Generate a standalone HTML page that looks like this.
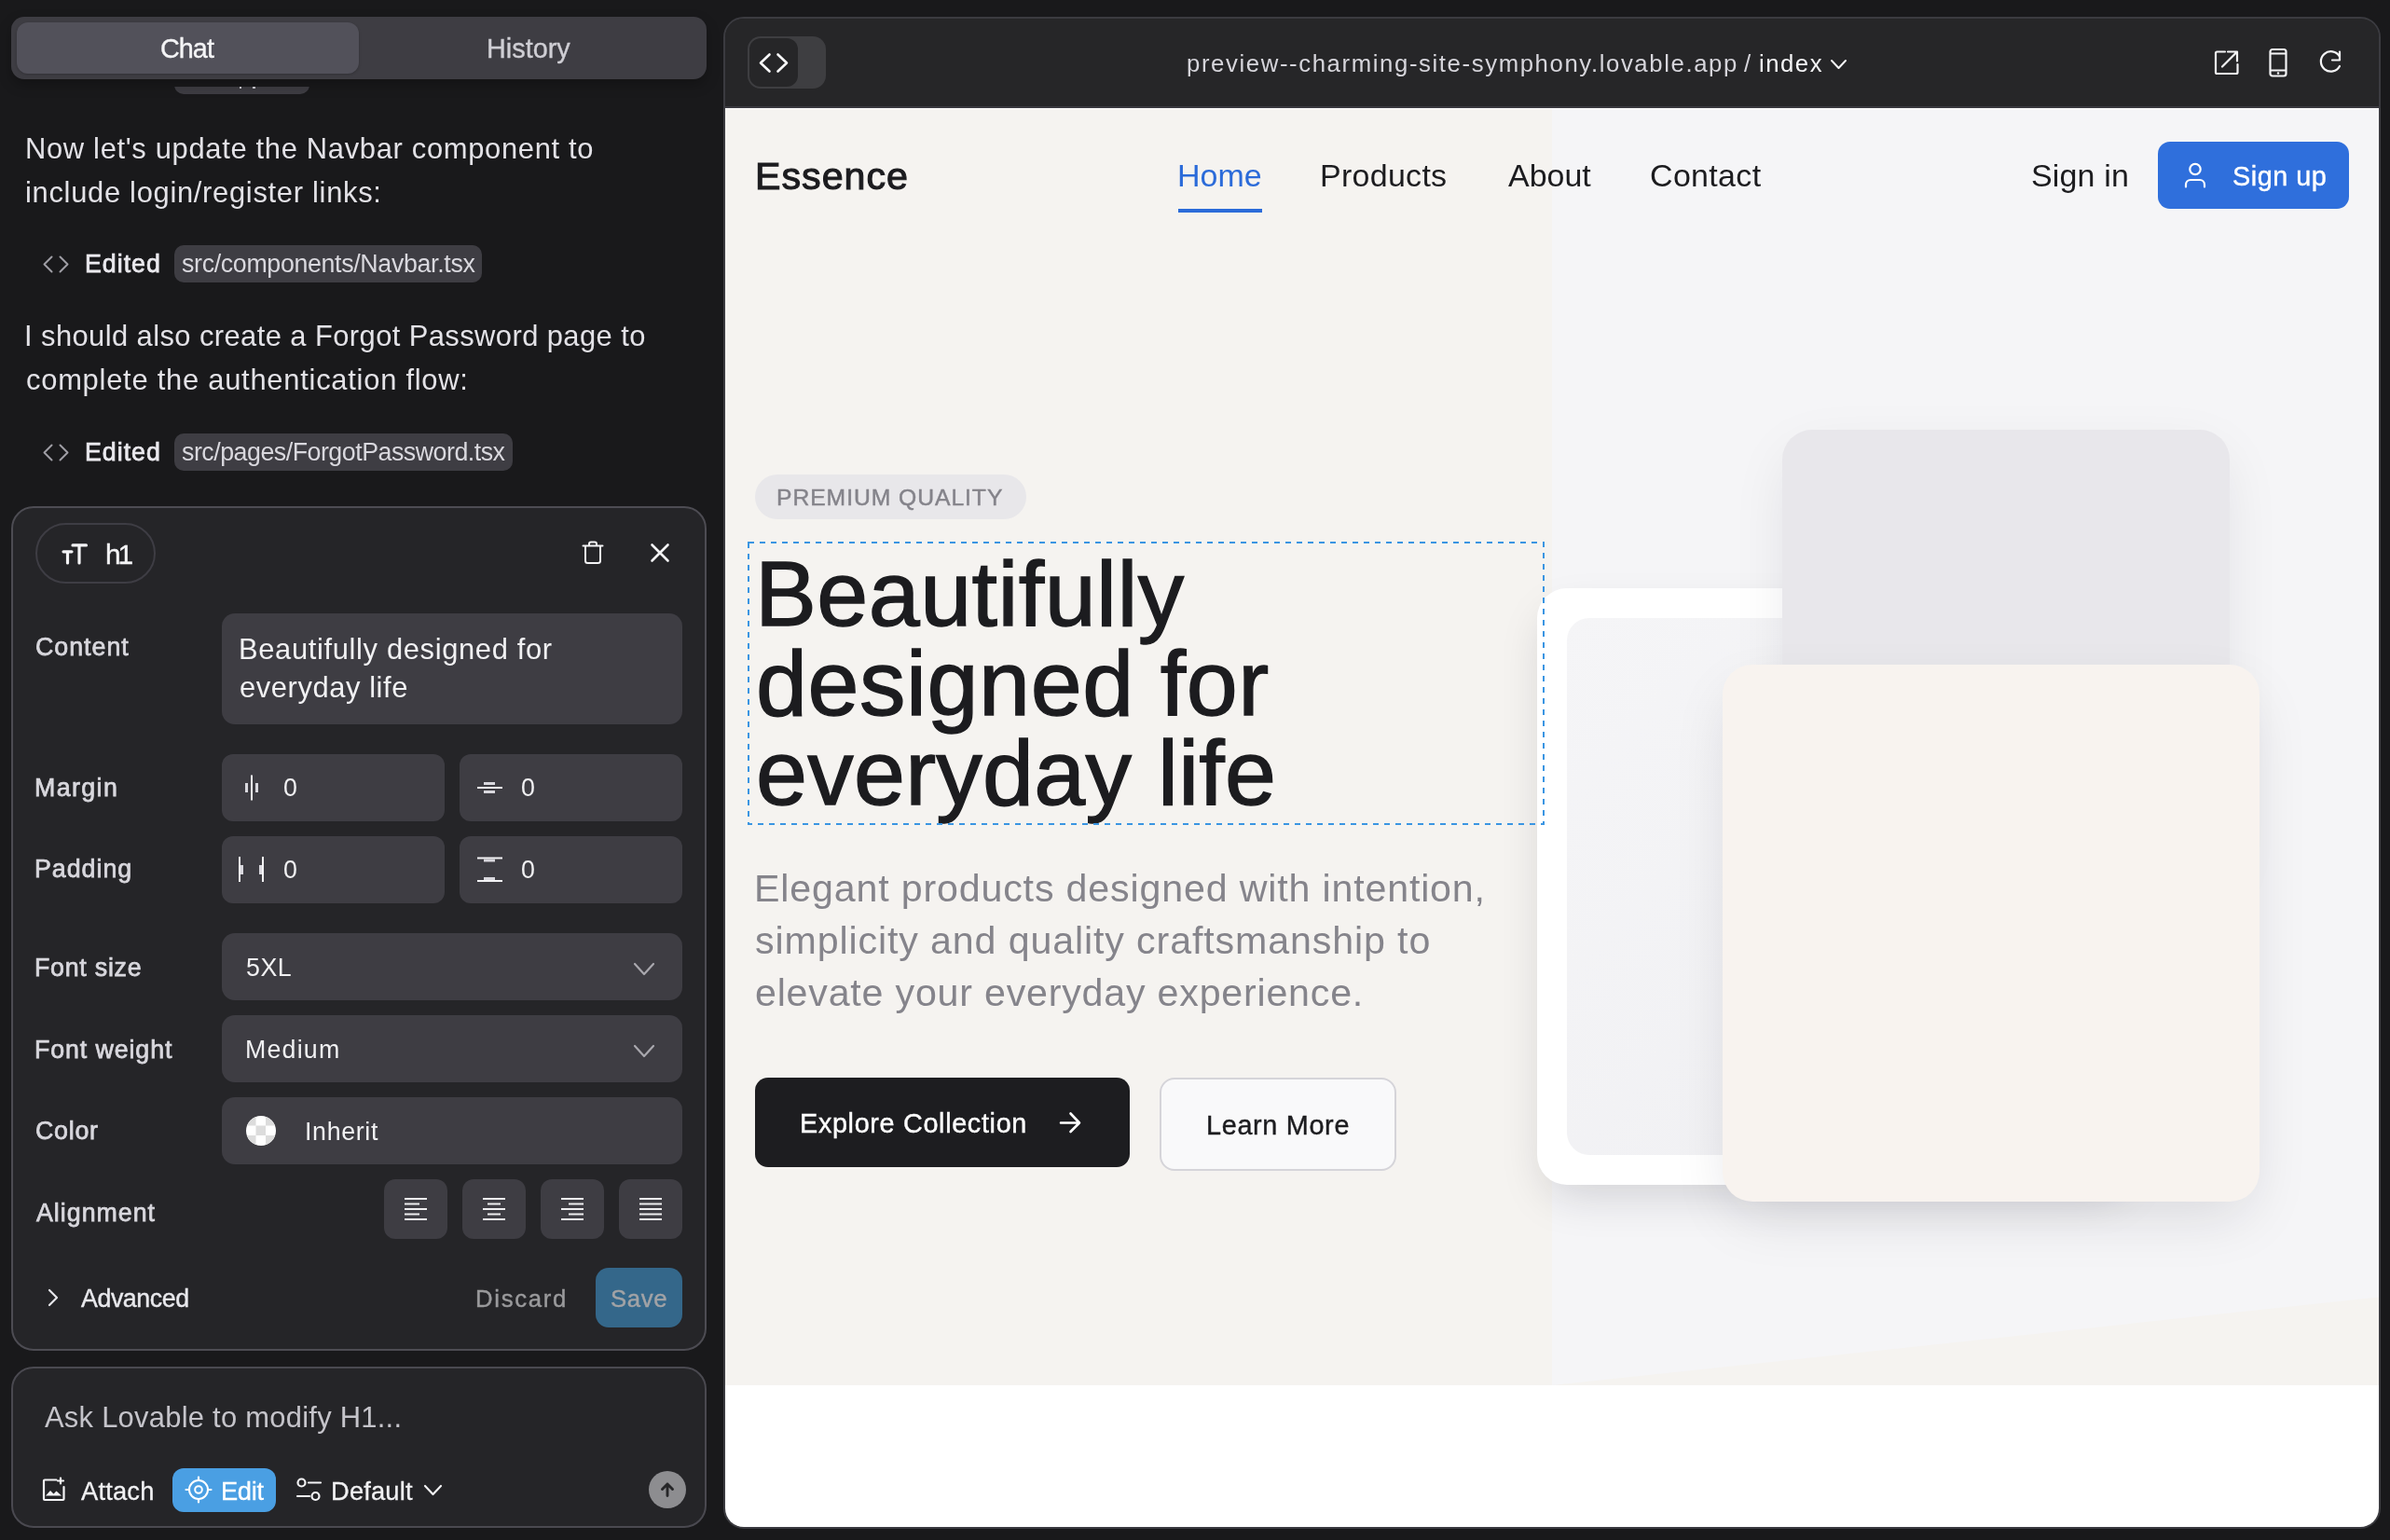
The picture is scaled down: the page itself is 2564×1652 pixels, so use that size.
<!DOCTYPE html>
<html><head><meta charset="utf-8"><style>
html,body{margin:0;padding:0;}
body{width:2564px;height:1652px;position:relative;overflow:hidden;background:#19191b;font-family:"Liberation Sans", sans-serif;}
</style></head><body>
<div style="position:absolute;left:0;top:93px;width:770px;height:10px;overflow:hidden"><div style="position:absolute;left:187px;top:-32px;width:145px;height:40px;border-radius:10px;background:#3e3d43"></div><div style="position:absolute;left:256.5px;top:0;width:2.5px;height:2px;background:#cfced4"></div><div style="position:absolute;left:271px;top:0;width:2.5px;height:2px;background:#cfced4"></div></div>
<div style="position:absolute;left:12px;top:18px;width:746px;height:67px;background:#3e3d43;border-radius:14px;box-shadow:0 6px 14px rgba(0,0,0,0.25);"></div>
<div style="position:absolute;left:18px;top:24px;width:367px;height:55px;background:#52515a;border-radius:12px;box-shadow:0 1px 3px rgba(0,0,0,0.2);"></div>
<div style="position:absolute;left:172.00px;top:37.88px;font-size:28.84px;line-height:28.84px;color:#f4f4f6;font-weight:400;letter-spacing:-1.000px;white-space:nowrap;will-change:transform;-webkit-text-stroke:0.35px #f4f4f6;">Chat</div>
<div style="position:absolute;left:522.00px;top:37.88px;font-size:28.84px;line-height:28.84px;color:#cfced4;font-weight:400;letter-spacing:0.000px;white-space:nowrap;will-change:transform;-webkit-text-stroke:0.35px #cfced4;">History</div>
<div style="position:absolute;left:27.40px;top:144.74px;font-size:30.9px;line-height:30.9px;color:#e3e2e7;font-weight:400;letter-spacing:0.682px;white-space:nowrap;will-change:transform;">Now let's update the Navbar component to</div>
<div style="position:absolute;left:27.40px;top:191.84px;font-size:30.9px;line-height:30.9px;color:#e3e2e7;font-weight:400;letter-spacing:0.700px;white-space:nowrap;will-change:transform;">include login/register links:</div>
<div style="position:absolute;left:26.00px;top:346.04px;font-size:30.9px;line-height:30.9px;color:#e3e2e7;font-weight:400;letter-spacing:0.422px;white-space:nowrap;will-change:transform;">I should also create a Forgot Password page to</div>
<div style="position:absolute;left:28.00px;top:392.74px;font-size:30.9px;line-height:30.9px;color:#e3e2e7;font-weight:400;letter-spacing:0.750px;white-space:nowrap;will-change:transform;">complete the authentication flow:</div>
<svg style="position:absolute;left:45px;top:274px;" width="30" height="19" viewBox="0 0 30 19" fill="none"><path d="M10.5 1.5 L2.5 9.5 L10.5 17.5 M19.5 1.5 L27.5 9.5 L19.5 17.5" stroke="#9f9ea5" stroke-width="2" stroke-linecap="round" stroke-linejoin="round"/></svg>
<div style="position:absolute;left:91.00px;top:269.63px;font-size:26.78px;line-height:26.78px;color:#ebeaef;font-weight:400;letter-spacing:1.000px;white-space:nowrap;will-change:transform;-webkit-text-stroke:0.75px #ebeaef;">Edited</div>
<div style="position:absolute;left:187px;top:263px;width:330px;height:40px;background:#3e3d43;border-radius:10px;"></div>
<div style="position:absolute;left:195.00px;top:270.03px;font-size:26.78px;line-height:26.78px;color:#d9d8de;font-weight:400;letter-spacing:-0.333px;white-space:nowrap;will-change:transform;">src/components/Navbar.tsx</div>
<svg style="position:absolute;left:45px;top:476px;" width="30" height="19" viewBox="0 0 30 19" fill="none"><path d="M10.5 1.5 L2.5 9.5 L10.5 17.5 M19.5 1.5 L27.5 9.5 L19.5 17.5" stroke="#9f9ea5" stroke-width="2" stroke-linecap="round" stroke-linejoin="round"/></svg>
<div style="position:absolute;left:91.00px;top:471.63px;font-size:26.78px;line-height:26.78px;color:#ebeaef;font-weight:400;letter-spacing:1.000px;white-space:nowrap;will-change:transform;-webkit-text-stroke:0.75px #ebeaef;">Edited</div>
<div style="position:absolute;left:187px;top:465px;width:363px;height:40px;background:#3e3d43;border-radius:10px;"></div>
<div style="position:absolute;left:195.00px;top:472.03px;font-size:26.78px;line-height:26.78px;color:#d9d8de;font-weight:400;letter-spacing:-0.481px;white-space:nowrap;will-change:transform;">src/pages/ForgotPassword.tsx</div>
<div style="position:absolute;left:12px;top:543px;width:746px;height:906px;background:#252528;border-radius:24px;box-sizing:border-box;border:2px solid #4d4c53;"></div>
<div style="position:absolute;left:38px;top:561px;width:129px;height:65px;background:transparent;border-radius:33px;box-sizing:border-box;border:2px solid #3e3d44;"></div>
<svg style="position:absolute;left:64px;top:581px;" width="32" height="26" viewBox="0 0 32 26" fill="none"><path d="M4 10.8 H13 M8.5 10.8 V23 M14 3.9 H28.5 M21 3.9 V23" stroke="#f4f4f6" stroke-width="3.2" stroke-linecap="round"/></svg>
<div style="position:absolute;left:113.00px;top:580.01px;font-size:29.87px;line-height:29.87px;color:#f4f4f6;font-weight:400;letter-spacing:-3.200px;white-space:nowrap;will-change:transform;-webkit-text-stroke:0.4px #f4f4f6;">h1</div>
<svg style="position:absolute;left:624px;top:580px;" width="24" height="26" viewBox="0 0 24 26" fill="none"><path d="M1.5 5.5 H22.5 M8 5 V3.5 A2 2 0 0 1 10 1.5 H14 A2 2 0 0 1 16 3.5 V5 M4 5.5 V21.5 A2.5 2.5 0 0 0 6.5 24 H17.5 A2.5 2.5 0 0 0 20 21.5 V5.5" stroke="#f4f4f6" stroke-width="2" stroke-linecap="round" stroke-linejoin="round"/></svg>
<svg style="position:absolute;left:697px;top:582px;" width="22" height="22" viewBox="0 0 22 22" fill="none"><path d="M2.5 2.5 L19.5 19.5 M19.5 2.5 L2.5 19.5" stroke="#f4f4f6" stroke-width="2.6" stroke-linecap="round"/></svg>
<div style="position:absolute;left:37.50px;top:681.13px;font-size:26.78px;line-height:26.78px;color:#d9d8de;font-weight:400;letter-spacing:1.000px;white-space:nowrap;will-change:transform;-webkit-text-stroke:0.75px #d9d8de;">Content</div>
<div style="position:absolute;left:238px;top:658px;width:494px;height:119px;background:#3e3d43;border-radius:14px;"></div>
<div style="position:absolute;left:256.00px;top:682.34px;font-size:30.9px;line-height:30.9px;color:#f1f1f3;font-weight:400;letter-spacing:0.652px;white-space:nowrap;will-change:transform;">Beautifully designed for</div>
<div style="position:absolute;left:257.00px;top:723.34px;font-size:30.9px;line-height:30.9px;color:#f1f1f3;font-weight:400;letter-spacing:0.583px;white-space:nowrap;will-change:transform;">everyday life</div>
<div style="position:absolute;left:37.00px;top:832.03px;font-size:26.78px;line-height:26.78px;color:#d9d8de;font-weight:400;letter-spacing:1.400px;white-space:nowrap;will-change:transform;-webkit-text-stroke:0.75px #d9d8de;">Margin</div>
<div style="position:absolute;left:238px;top:809px;width:239px;height:72px;background:#3e3d43;border-radius:12px;"></div>
<div style="position:absolute;left:493px;top:809px;width:239px;height:72px;background:#3e3d43;border-radius:12px;"></div>
<svg style="position:absolute;left:262px;top:831px;" width="16" height="28" viewBox="0 0 16 28" fill="none"><rect x="1" y="9" width="3" height="10" fill="#d9d8de"/><rect x="12" y="9" width="3" height="10" fill="#d9d8de"/><rect x="7" y="0.5" width="2" height="27" fill="#f4f4f6"/></svg>
<div style="position:absolute;left:304.00px;top:832.43px;font-size:26.78px;line-height:26.78px;color:#f1f1f3;font-weight:400;letter-spacing:27.000px;white-space:nowrap;will-change:transform;">0</div>
<svg style="position:absolute;left:512px;top:838px;" width="27" height="14" viewBox="0 0 27 14" fill="none"><rect x="7" y="1" width="12" height="3" fill="#d9d8de"/><rect x="7" y="10" width="12" height="3" fill="#d9d8de"/><rect x="0" y="6" width="27" height="2" fill="#f4f4f6"/></svg>
<div style="position:absolute;left:559.00px;top:832.43px;font-size:26.78px;line-height:26.78px;color:#f1f1f3;font-weight:400;letter-spacing:20.000px;white-space:nowrap;will-change:transform;">0</div>
<div style="position:absolute;left:37.00px;top:919.33px;font-size:26.78px;line-height:26.78px;color:#d9d8de;font-weight:400;letter-spacing:1.000px;white-space:nowrap;will-change:transform;-webkit-text-stroke:0.75px #d9d8de;">Padding</div>
<div style="position:absolute;left:238px;top:897px;width:239px;height:72px;background:#3e3d43;border-radius:12px;"></div>
<div style="position:absolute;left:493px;top:897px;width:239px;height:72px;background:#3e3d43;border-radius:12px;"></div>
<svg style="position:absolute;left:255px;top:919px;" width="30" height="28" viewBox="0 0 30 28" fill="none"><rect x="1" y="0" width="2" height="27" fill="#f4f4f6"/><rect x="3" y="9" width="3" height="10" fill="#d9d8de"/><rect x="26" y="0" width="2" height="27" fill="#f4f4f6"/><rect x="23" y="9" width="3" height="10" fill="#d9d8de"/></svg>
<div style="position:absolute;left:304.00px;top:920.43px;font-size:26.78px;line-height:26.78px;color:#f1f1f3;font-weight:400;letter-spacing:27.000px;white-space:nowrap;will-change:transform;">0</div>
<svg style="position:absolute;left:512px;top:919px;" width="27" height="28" viewBox="0 0 27 28" fill="none"><rect x="0" y="0.5" width="27" height="2" fill="#f4f4f6"/><rect x="7" y="2.5" width="12" height="3" fill="#d9d8de"/><rect x="7" y="22" width="12" height="3" fill="#d9d8de"/><rect x="0" y="25" width="27" height="2" fill="#f4f4f6"/></svg>
<div style="position:absolute;left:559.00px;top:920.43px;font-size:26.78px;line-height:26.78px;color:#f1f1f3;font-weight:400;letter-spacing:20.000px;white-space:nowrap;will-change:transform;">0</div>
<div style="position:absolute;left:36.50px;top:1024.53px;font-size:26.78px;line-height:26.78px;color:#d9d8de;font-weight:400;letter-spacing:0.750px;white-space:nowrap;will-change:transform;-webkit-text-stroke:0.75px #d9d8de;">Font size</div>
<div style="position:absolute;left:238px;top:1001px;width:494px;height:72px;background:#3e3d43;border-radius:14px;"></div>
<div style="position:absolute;left:264.00px;top:1024.53px;font-size:26.78px;line-height:26.78px;color:#f1f1f3;font-weight:400;letter-spacing:0.500px;white-space:nowrap;will-change:transform;">5XL</div>
<svg style="position:absolute;left:678.5px;top:1031.5px;" width="24" height="15" viewBox="0 0 24 15" fill="none"><path d="M2 2 L12.0 13 L22 2" stroke="#a9a8ae" stroke-width="2.2" stroke-linecap="round" stroke-linejoin="round"/></svg>
<div style="position:absolute;left:36.50px;top:1112.73px;font-size:26.78px;line-height:26.78px;color:#d9d8de;font-weight:400;letter-spacing:0.900px;white-space:nowrap;will-change:transform;-webkit-text-stroke:0.75px #d9d8de;">Font weight</div>
<div style="position:absolute;left:238px;top:1089px;width:494px;height:72px;background:#3e3d43;border-radius:14px;"></div>
<div style="position:absolute;left:263.00px;top:1112.73px;font-size:26.78px;line-height:26.78px;color:#f1f1f3;font-weight:400;letter-spacing:1.200px;white-space:nowrap;will-change:transform;">Medium</div>
<svg style="position:absolute;left:678.5px;top:1119.5px;" width="24" height="15" viewBox="0 0 24 15" fill="none"><path d="M2 2 L12.0 13 L22 2" stroke="#a9a8ae" stroke-width="2.2" stroke-linecap="round" stroke-linejoin="round"/></svg>
<div style="position:absolute;left:37.50px;top:1200.23px;font-size:26.78px;line-height:26.78px;color:#d9d8de;font-weight:400;letter-spacing:0.750px;white-space:nowrap;will-change:transform;-webkit-text-stroke:0.75px #d9d8de;">Color</div>
<div style="position:absolute;left:238px;top:1177px;width:494px;height:72px;background:#3e3d43;border-radius:14px;"></div>
<svg style="position:absolute;left:264px;top:1197px;" width="32" height="32" viewBox="0 0 32 32" fill="none"><defs><clipPath id="cc"><circle cx="16" cy="16" r="16"/></clipPath></defs><g clip-path="url(#cc)"><rect width="32" height="32" fill="#ffffff"/><rect x="0" y="0" width="10.5" height="10.5" fill="#dcdcdc"/><rect x="21" y="0" width="11" height="10.5" fill="#dcdcdc"/><rect x="10.5" y="10.5" width="10.5" height="10.5" fill="#dcdcdc"/><rect x="0" y="21" width="10.5" height="11" fill="#dcdcdc"/><rect x="21" y="21" width="11" height="11" fill="#dcdcdc"/></g></svg>
<div style="position:absolute;left:327.00px;top:1200.63px;font-size:26.78px;line-height:26.78px;color:#f1f1f3;font-weight:400;letter-spacing:0.667px;white-space:nowrap;will-change:transform;">Inherit</div>
<div style="position:absolute;left:38.50px;top:1287.63px;font-size:26.78px;line-height:26.78px;color:#d9d8de;font-weight:400;letter-spacing:1.000px;white-space:nowrap;will-change:transform;-webkit-text-stroke:0.75px #d9d8de;">Alignment</div>
<div style="position:absolute;left:412px;top:1265px;width:68px;height:64px;background:#3e3d43;border-radius:12px;"></div>
<svg style="position:absolute;left:434px;top:1284px;" width="24" height="25" viewBox="0 0 24 25" fill="none"><rect x="0" y="1" width="24" height="2" fill="#eeeef0"/><rect x="0" y="6.5" width="16" height="2" fill="#eeeef0"/><rect x="0" y="12" width="24" height="2" fill="#eeeef0"/><rect x="0" y="17.5" width="16" height="2" fill="#eeeef0"/><rect x="0" y="23" width="24" height="2" fill="#eeeef0"/></svg>
<div style="position:absolute;left:496px;top:1265px;width:68px;height:64px;background:#3e3d43;border-radius:12px;"></div>
<svg style="position:absolute;left:518px;top:1284px;" width="24" height="25" viewBox="0 0 24 25" fill="none"><rect x="0.0" y="1" width="24" height="2" fill="#eeeef0"/><rect x="5.0" y="6.5" width="14" height="2" fill="#eeeef0"/><rect x="0.0" y="12" width="24" height="2" fill="#eeeef0"/><rect x="5.0" y="17.5" width="14" height="2" fill="#eeeef0"/><rect x="0.0" y="23" width="24" height="2" fill="#eeeef0"/></svg>
<div style="position:absolute;left:580px;top:1265px;width:68px;height:64px;background:#3e3d43;border-radius:12px;"></div>
<svg style="position:absolute;left:602px;top:1284px;" width="24" height="25" viewBox="0 0 24 25" fill="none"><rect x="0" y="1" width="24" height="2" fill="#eeeef0"/><rect x="8" y="6.5" width="16" height="2" fill="#eeeef0"/><rect x="0" y="12" width="24" height="2" fill="#eeeef0"/><rect x="8" y="17.5" width="16" height="2" fill="#eeeef0"/><rect x="0" y="23" width="24" height="2" fill="#eeeef0"/></svg>
<div style="position:absolute;left:664px;top:1265px;width:68px;height:64px;background:#3e3d43;border-radius:12px;"></div>
<svg style="position:absolute;left:686px;top:1284px;" width="24" height="25" viewBox="0 0 24 25" fill="none"><rect x="0" y="1" width="24" height="2" fill="#eeeef0"/><rect x="0" y="6.5" width="24" height="2" fill="#eeeef0"/><rect x="0" y="12" width="24" height="2" fill="#eeeef0"/><rect x="0" y="17.5" width="24" height="2" fill="#eeeef0"/><rect x="0" y="23" width="24" height="2" fill="#eeeef0"/></svg>
<svg style="position:absolute;left:50px;top:1382px;" width="16" height="20" viewBox="0 0 16 20" fill="none"><path d="M3 2 L11 10 L3 18" stroke="#e6e6ea" stroke-width="2.2" stroke-linecap="round" stroke-linejoin="round"/></svg>
<div style="position:absolute;left:86.50px;top:1379.53px;font-size:26.78px;line-height:26.78px;color:#e9e9ed;font-weight:400;letter-spacing:-0.429px;white-space:nowrap;will-change:transform;-webkit-text-stroke:0.4px #e9e9ed;">Advanced</div>
<div style="position:absolute;left:510.00px;top:1381.00px;font-size:25.75px;line-height:25.75px;color:#9a9a9c;font-weight:400;letter-spacing:1.667px;white-space:nowrap;will-change:transform;-webkit-text-stroke:0.4px #9a9a9c;">Discard</div>
<div style="position:absolute;left:639px;top:1360px;width:93px;height:64px;background:#34678a;border-radius:14px;"></div>
<div style="position:absolute;left:655.00px;top:1381.00px;font-size:25.75px;line-height:25.75px;color:#a2a3a6;font-weight:400;letter-spacing:0.667px;white-space:nowrap;will-change:transform;-webkit-text-stroke:0.4px #a2a3a6;">Save</div>
<div style="position:absolute;left:12px;top:1466px;width:746px;height:173px;background:#252528;border-radius:24px;box-sizing:border-box;border:2px solid #4a4950;"></div>
<div style="position:absolute;left:47.50px;top:1506.24px;font-size:30.9px;line-height:30.9px;color:#c5c4ca;font-weight:400;letter-spacing:0.269px;white-space:nowrap;will-change:transform;">Ask Lovable to modify H1...</div>
<svg style="position:absolute;left:44px;top:1583px;" width="28" height="28" viewBox="0 0 28 28" fill="none"><path d="M16.5 4.5 H4 A1 1 0 0 0 3 5.5 V25 A1 1 0 0 0 4 26 H23.5 A1 1 0 0 0 24.5 25 V12" stroke="#f4f4f6" stroke-width="2.2" stroke-linecap="round"/><path d="M21 2.5 V8.5 M18 5.5 H24" stroke="#f4f4f6" stroke-width="2.2" stroke-linecap="round"/><path d="M5 21.5 L10 16 L13.5 19.5 L16.5 16.5 L22 21.5 Z" fill="#f4f4f6"/></svg>
<div style="position:absolute;left:87.00px;top:1585.99px;font-size:27.3px;line-height:27.3px;color:#f1f1f3;font-weight:400;letter-spacing:0.200px;white-space:nowrap;will-change:transform;-webkit-text-stroke:0.3px #f1f1f3;">Attach</div>
<div style="position:absolute;left:185px;top:1575px;width:111px;height:47px;background:#4a9fe3;border-radius:12px;"></div>
<svg style="position:absolute;left:197px;top:1582px;" width="32" height="32" viewBox="0 0 32 32" fill="none"><circle cx="16" cy="16" r="10" stroke="#ffffff" stroke-width="2"/><circle cx="16" cy="16" r="3.8" stroke="#ffffff" stroke-width="2"/><path d="M16 2.5 V6 M16 26 V29.5 M2.5 16 H6 M26 16 H29.5" stroke="#ffffff" stroke-width="2.2" stroke-linecap="round"/></svg>
<div style="position:absolute;left:237.00px;top:1585.99px;font-size:27.3px;line-height:27.3px;color:#ffffff;font-weight:400;letter-spacing:-0.333px;white-space:nowrap;will-change:transform;-webkit-text-stroke:0.3px #ffffff;">Edit</div>
<svg style="position:absolute;left:317px;top:1585px;" width="30" height="26" viewBox="0 0 30 26" fill="none"><circle cx="6.5" cy="5.5" r="4" stroke="#f4f4f6" stroke-width="2.2"/><path d="M14 5.5 H27" stroke="#f4f4f6" stroke-width="2.2" stroke-linecap="round"/><circle cx="21.5" cy="20" r="4" stroke="#f4f4f6" stroke-width="2.2"/><path d="M2 20 H15" stroke="#f4f4f6" stroke-width="2.2" stroke-linecap="round"/></svg>
<div style="position:absolute;left:355.00px;top:1585.99px;font-size:27.3px;line-height:27.3px;color:#f1f1f3;font-weight:400;letter-spacing:0.167px;white-space:nowrap;will-change:transform;-webkit-text-stroke:0.3px #f1f1f3;">Default</div>
<svg style="position:absolute;left:453.5px;top:1591.5px;" width="21" height="13" viewBox="0 0 21 13" fill="none"><path d="M2 2 L10.5 11 L19 2" stroke="#f1f1f3" stroke-width="2.2" stroke-linecap="round" stroke-linejoin="round"/></svg>
<div style="position:absolute;left:696px;top:1578px;width:40px;height:40px;border-radius:20px;background:#8d8d90"></div>
<svg style="position:absolute;left:706px;top:1588px;" width="20" height="20" viewBox="0 0 20 20" fill="none"><path d="M10 16.5 V4 M4.5 9.5 L10 4 L15.5 9.5" stroke="#262628" stroke-width="2.9" stroke-linecap="round" stroke-linejoin="round"/></svg>
<div style="position:absolute;left:776px;top:18px;width:1778px;height:1622px;box-sizing:border-box;border:2px solid #3b3b40;border-radius:22px;overflow:hidden;background:#262628">
<div style="position:absolute;left:0px;top:0px;width:1774px;height:94px;background:#262628;border-radius:0px;"></div>
<div style="position:absolute;left:0px;top:94px;width:1774px;height:2px;background:#3a393f;border-radius:0px;"></div>
<div style="position:absolute;left:0px;top:96px;width:1774px;height:1522px;background:#ffffff;border-radius:0px;"></div>
<div style="position:absolute;left:24px;top:19px;width:84px;height:56px;background:#3e3e41;border-radius:14px;"></div>
<div style="position:absolute;left:26px;top:21px;width:52px;height:52px;background:#262628;border-radius:12px;"></div>
<svg style="position:absolute;left:34px;top:35px;" width="36" height="24" viewBox="0 0 36 24" fill="none"><path d="M13.5 3.5 L4 12.5 L13.5 21.5 M22.5 3.5 L32 12.5 L22.5 21.5" stroke="#f7f7f8" stroke-width="2.6" stroke-linecap="round" stroke-linejoin="round"/></svg>
<div style="position:absolute;left:495.00px;top:35.70px;font-size:25.75px;line-height:25.75px;color:#d6d5db;font-weight:400;letter-spacing:1.595px;white-space:nowrap;will-change:transform;">preview--charming-site-symphony.lovable.app</div>
<div style="position:absolute;left:1093.00px;top:35.70px;font-size:25.75px;line-height:25.75px;color:#d6d5db;font-weight:400;letter-spacing:0.000px;white-space:nowrap;will-change:transform;">/</div>
<div style="position:absolute;left:1109.00px;top:35.70px;font-size:25.75px;line-height:25.75px;color:#f4f4f6;font-weight:400;letter-spacing:1.500px;white-space:nowrap;will-change:transform;">index</div>
<svg style="position:absolute;left:1184.5px;top:43px;" width="19" height="12" viewBox="0 0 19 12" fill="none"><path d="M2 2 L9.5 10 L17 2" stroke="#f4f4f6" stroke-width="2.0" stroke-linecap="round" stroke-linejoin="round"/></svg>
<svg style="position:absolute;left:1594px;top:30px;" width="34" height="34" viewBox="0 0 34 34" fill="none"><path d="M15 5.5 H6.5 A1.5 1.5 0 0 0 5 7 V27.5 A1.5 1.5 0 0 0 6.5 29 H27 A1.5 1.5 0 0 0 28.5 27.5 V19" stroke="#f4f4f6" stroke-width="2.2" stroke-linecap="round"/><path d="M18 5.5 H28 V15.5 M12 21.5 L27.5 6" stroke="#f4f4f6" stroke-width="2.2" stroke-linecap="round" stroke-linejoin="round"/></svg>
<svg style="position:absolute;left:1652px;top:28px;" width="30" height="38" viewBox="0 0 30 38" fill="none"><rect x="5.5" y="5" width="17" height="28.5" rx="2.5" stroke="#f4f4f6" stroke-width="2.2"/><path d="M6 9.5 H22 M6 27.5 H22" stroke="#f4f4f6" stroke-width="2"/><circle cx="14" cy="30.5" r="1.2" fill="#f4f4f6"/></svg>
<svg style="position:absolute;left:1706px;top:30px;" width="34" height="34" viewBox="0 0 34 34" fill="none"><path d="M26 21 A10.7 10.7 0 1 1 25.8 10.5" stroke="#f4f4f6" stroke-width="2.2" stroke-linecap="round"/><path d="M26 5.5 V14.5 H18" stroke="#f4f4f6" stroke-width="2.2" stroke-linecap="round" stroke-linejoin="round"/></svg>
<div style="position:absolute;left:0px;top:97px;width:1774px;height:1369px;background:#f5f3f0;border-radius:0px;"></div>
<div style="position:absolute;left:887px;top:97px;width:887px;height:1369px;background:#f5f5f7;clip-path:polygon(0 0,100% 0,100% 93.1%,0 100%)"></div>
<div style="position:absolute;left:32.00px;top:148.62px;font-size:41.2px;line-height:41.2px;color:#1c1c1f;font-weight:400;letter-spacing:1.000px;white-space:nowrap;will-change:transform;-webkit-text-stroke:1.1px #1c1c1f;">Essence</div>
<div style="position:absolute;left:485.00px;top:151.12px;font-size:33.99px;line-height:33.99px;color:#2b6bd9;font-weight:400;letter-spacing:-0.000px;white-space:nowrap;will-change:transform;">Home</div>
<div style="position:absolute;left:486px;top:204px;width:90px;height:4px;background:#2b6bd9;border-radius:0px;"></div>
<div style="position:absolute;left:638.00px;top:151.12px;font-size:33.99px;line-height:33.99px;color:#1c1c1f;font-weight:400;letter-spacing:0.286px;white-space:nowrap;will-change:transform;">Products</div>
<div style="position:absolute;left:840.00px;top:151.12px;font-size:33.99px;line-height:33.99px;color:#1c1c1f;font-weight:400;letter-spacing:0.000px;white-space:nowrap;will-change:transform;">About</div>
<div style="position:absolute;left:992.00px;top:151.12px;font-size:33.99px;line-height:33.99px;color:#1c1c1f;font-weight:400;letter-spacing:0.333px;white-space:nowrap;will-change:transform;">Contact</div>
<div style="position:absolute;left:1401.00px;top:151.12px;font-size:33.99px;line-height:33.99px;color:#1c1c1f;font-weight:400;letter-spacing:0.167px;white-space:nowrap;will-change:transform;">Sign in</div>
<div style="position:absolute;left:1537px;top:132px;width:205px;height:72px;background:#2f6fdc;border-radius:13px;"></div>
<svg style="position:absolute;left:1562px;top:150px;" width="30" height="34" viewBox="0 0 30 34" fill="none"><circle cx="15" cy="11.5" r="5.7" stroke="#ffffff" stroke-width="2.2"/><path d="M5 30.5 V28 A5 5 0 0 1 10 23 H20 A5 5 0 0 1 25 28 V30.5" stroke="#ffffff" stroke-width="2.2" stroke-linecap="round"/></svg>
<div style="position:absolute;left:1617.00px;top:154.98px;font-size:28.84px;line-height:28.84px;color:#ffffff;font-weight:400;letter-spacing:0.500px;white-space:nowrap;will-change:transform;-webkit-text-stroke:0.4px #ffffff;">Sign up</div>
<div style="position:absolute;left:871px;top:611px;width:640px;height:640px;background:#ffffff;border-radius:32px;box-shadow:0 20px 50px -12px rgba(20,20,40,0.18);"></div>
<div style="position:absolute;left:903px;top:643px;width:576px;height:576px;background:linear-gradient(135deg,#f5f5f7,#efeff2);border-radius:24px;"></div>
<div style="position:absolute;left:1134px;top:441px;width:480px;height:480px;background:#e8e7eb;border-radius:32px;box-shadow:0 20px 64px -10px rgba(20,20,40,0.10);"></div>
<div style="position:absolute;left:1070px;top:693px;width:576px;height:576px;background:#f8f3ef;border-radius:32px;box-shadow:0 24px 64px -12px rgba(20,20,40,0.13);"></div>
<div style="position:absolute;left:32px;top:489px;width:291px;height:48px;background:#e8e7ea;border-radius:24px;"></div>
<div style="position:absolute;left:55.10px;top:501.77px;font-size:24.72px;line-height:24.72px;color:#84838a;font-weight:400;letter-spacing:0.929px;white-space:nowrap;will-change:transform;-webkit-text-stroke:0.45px #84838a;">PREMIUM QUALITY</div>
<div style="position:absolute;left:32.00px;top:567.58px;font-size:98.88px;line-height:98.88px;color:#1c1c1f;font-weight:400;letter-spacing:0.400px;white-space:nowrap;will-change:transform;-webkit-text-stroke:1.4px #1c1c1f;">Beautifully</div>
<div style="position:absolute;left:33.00px;top:663.58px;font-size:98.88px;line-height:98.88px;color:#1c1c1f;font-weight:400;letter-spacing:0.545px;white-space:nowrap;will-change:transform;-webkit-text-stroke:1.4px #1c1c1f;">designed for</div>
<div style="position:absolute;left:33.00px;top:759.58px;font-size:98.88px;line-height:98.88px;color:#1c1c1f;font-weight:400;letter-spacing:0.250px;white-space:nowrap;will-change:transform;-webkit-text-stroke:1.4px #1c1c1f;">everyday life</div>
<svg style="position:absolute;left:24px;top:561px;" width="855" height="304" viewBox="0 0 855 304" fill="none"><rect x="1" y="1" width="853" height="302" stroke="#3a95e2" stroke-width="2" stroke-dasharray="6 6"/></svg>
<div style="position:absolute;left:31.00px;top:912.62px;font-size:41.2px;line-height:41.2px;color:#85848b;font-weight:400;letter-spacing:0.825px;white-space:nowrap;will-change:transform;">Elegant products designed with intention,</div>
<div style="position:absolute;left:32.00px;top:968.62px;font-size:41.2px;line-height:41.2px;color:#85848b;font-weight:400;letter-spacing:0.868px;white-space:nowrap;will-change:transform;">simplicity and quality craftsmanship to</div>
<div style="position:absolute;left:32.00px;top:1024.62px;font-size:41.2px;line-height:41.2px;color:#85848b;font-weight:400;letter-spacing:0.781px;white-space:nowrap;will-change:transform;">elevate your everyday experience.</div>
<div style="position:absolute;left:32px;top:1136px;width:402px;height:96px;background:#1d1d20;border-radius:14px;"></div>
<div style="position:absolute;left:80.00px;top:1171.28px;font-size:28.84px;line-height:28.84px;color:#ffffff;font-weight:400;letter-spacing:0.647px;white-space:nowrap;will-change:transform;-webkit-text-stroke:0.4px #ffffff;">Explore Collection</div>
<svg style="position:absolute;left:354px;top:1168px;" width="32" height="32" viewBox="0 0 32 32" fill="none"><path d="M6 16.5 H26 M16.5 6.5 L26 16.5 L16.5 26" stroke="#ffffff" stroke-width="2.6" stroke-linecap="round" stroke-linejoin="round"/></svg>
<div style="position:absolute;left:466px;top:1136px;width:254px;height:100px;background:#f9f9fa;border-radius:16px;box-sizing:border-box;border:2px solid #d5d4d9;"></div>
<div style="position:absolute;left:516.00px;top:1173.18px;font-size:28.84px;line-height:28.84px;color:#1c1c1f;font-weight:400;letter-spacing:0.667px;white-space:nowrap;will-change:transform;-webkit-text-stroke:0.4px #1c1c1f;">Learn More</div>
</div>
</body></html>
